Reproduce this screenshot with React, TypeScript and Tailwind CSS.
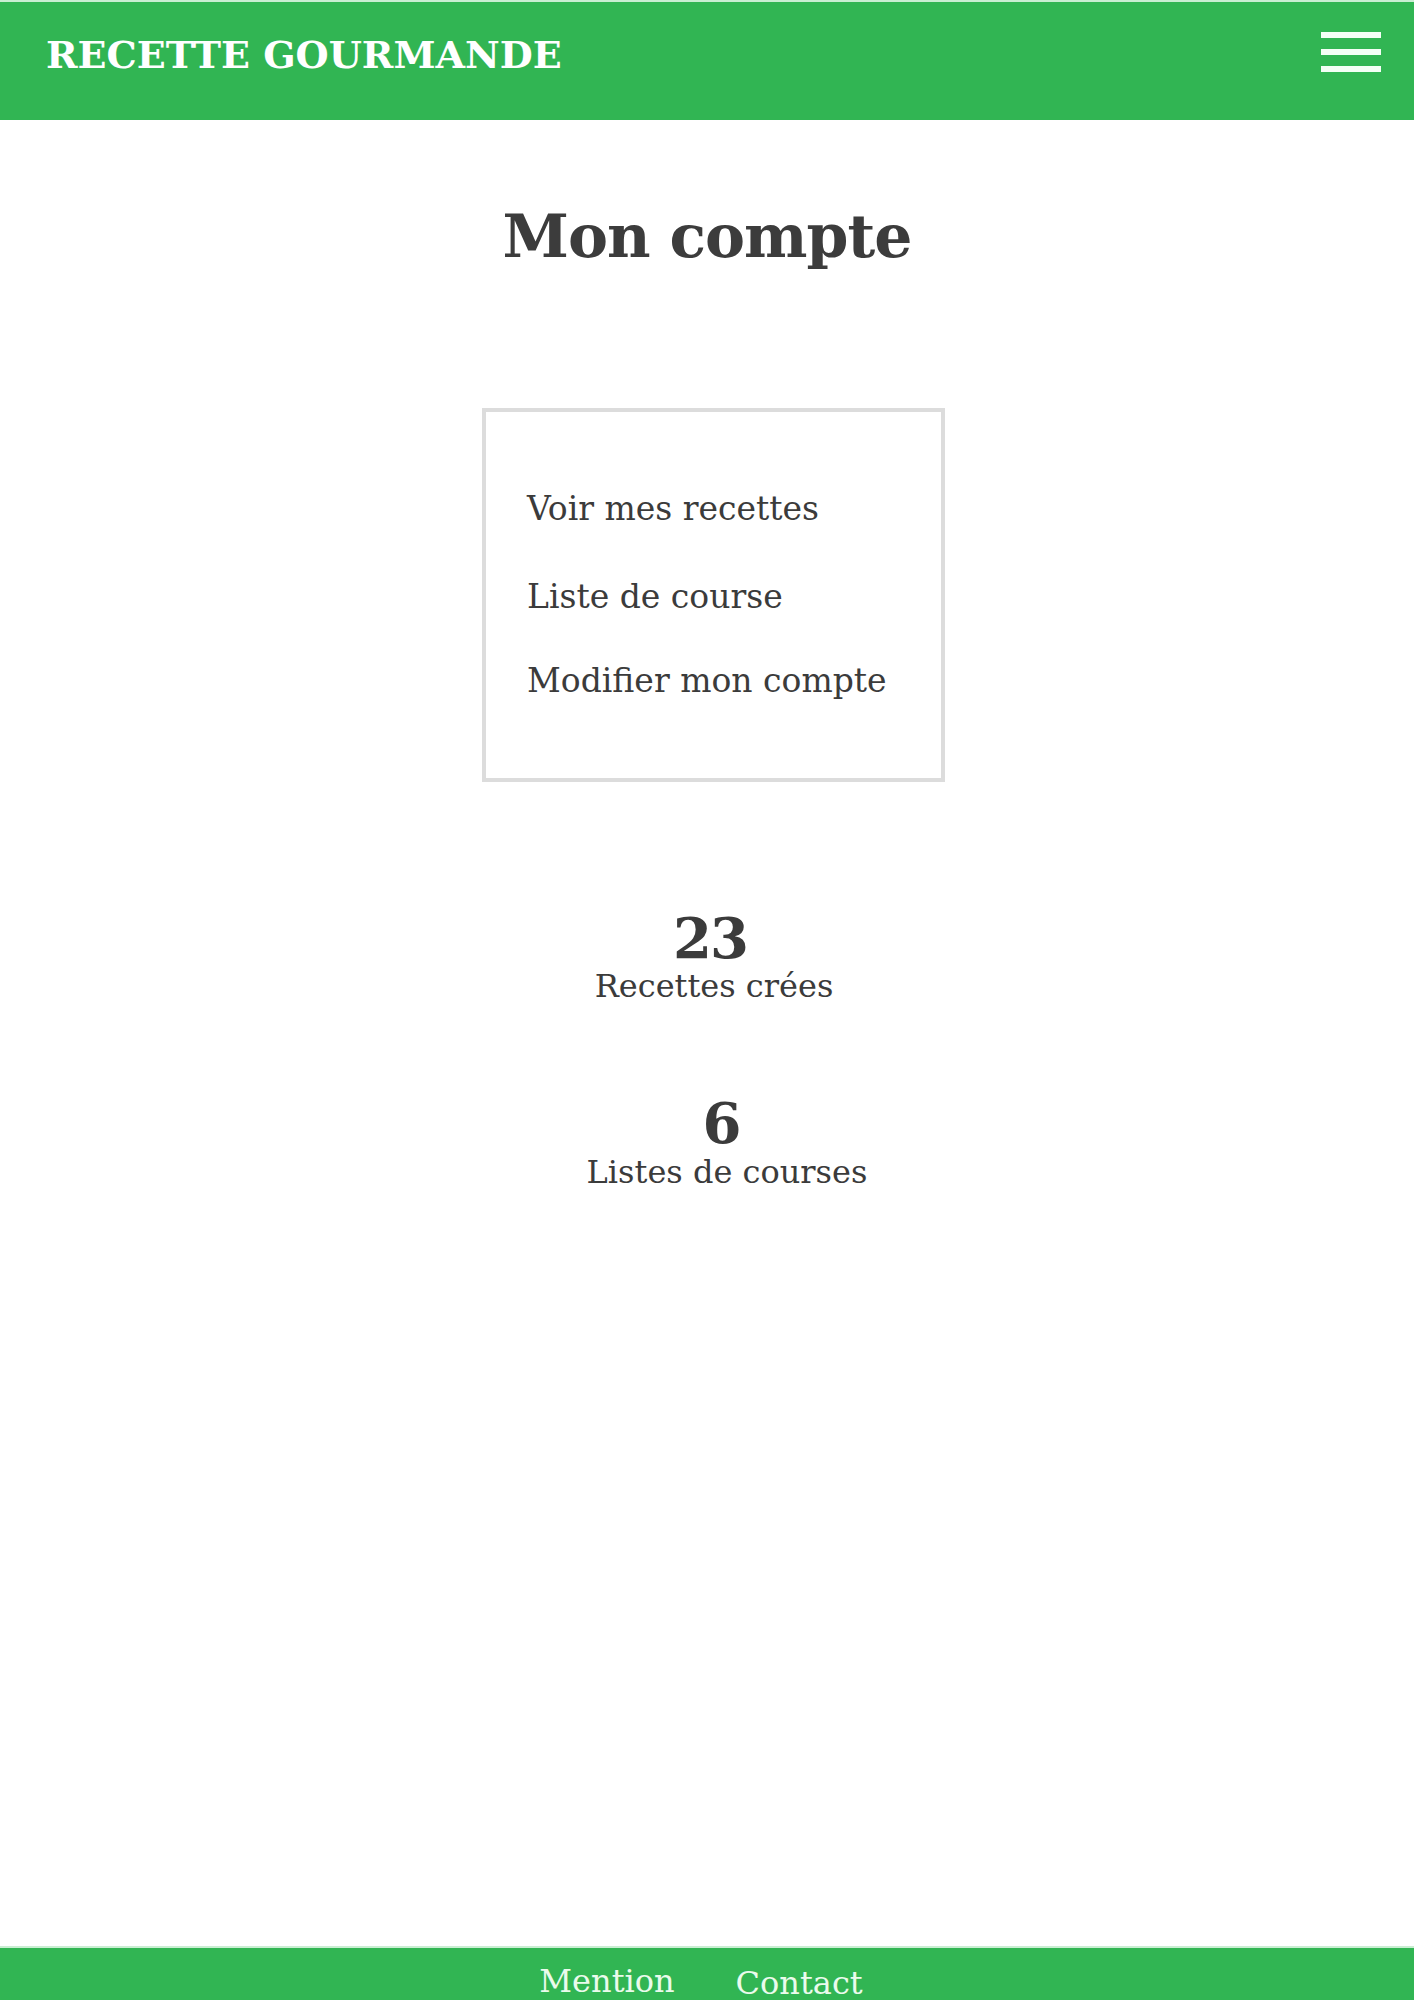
import React from "react";

export default function App() {
  const serif = { fontFamily: '"DejaVu Serif", "Liberation Serif", serif' };
  return (
    <div className="h-[2000px] w-full overflow-hidden bg-white flex flex-col text-[#3b3b3b]" style={serif}>
      <header className="h-[120px] shrink-0 border-t-2 border-[#c9eed2] bg-[#31b553] flex items-start justify-between pl-[46px] pr-[33px]">
        <div className="mt-[34px] text-[38px] leading-[38px] font-bold text-white">RECETTE GOURMANDE</div>
        <div className="mt-[30px] flex flex-col gap-[11px]">
          <span className="block h-[6px] w-[60px] bg-[#f4fff6]" />
          <span className="block h-[6px] w-[60px] bg-[#f4fff6]" />
          <span className="block h-[6px] w-[60px] bg-[#f4fff6]" />
        </div>
      </header>

      <main className="flex-1 flex flex-col items-center">
        <h1 className="mt-[86px] text-[60px] leading-[60px] font-bold tracking-[-1px] text-[#3c3c3c]">Mon compte</h1>

        <div className="mt-[142px] w-full flex justify-center pl-[13px]">
          <div className="w-[463px] h-[374px] border-4 border-[#dcdcdc] pl-[41px] pt-[80px]">
            <div className="text-[33px] leading-[33px]">Voir mes recettes</div>
            <div className="mt-[55px] text-[33px] leading-[33px]">Liste de course</div>
            <div className="mt-[51px] text-[33px] leading-[33px]">Modifier mon compte</div>
          </div>
        </div>

        <div className="mt-[128px] flex flex-col items-center pl-[6px]">
          <div className="text-[56px] leading-[56px] font-bold tracking-[-2px]">23</div>
          <div className="mt-[4px] text-[32px] leading-[32px] pl-[8px]">Recettes crées</div>
        </div>

        <div className="mt-[93px] flex flex-col items-center pl-[30px]">
          <div className="text-[56px] leading-[56px] font-bold">6</div>
          <div className="mt-[5px] text-[32px] leading-[32px] pl-[10px]">Listes de courses</div>
        </div>
      </main>

      <footer className="h-[54px] shrink-0 border-t-2 border-[#c9eed2] bg-[#31b553] flex justify-center gap-[61px] pt-[17px] pr-[12px] text-[#eafbec] text-[32px] leading-[32px]">
        <span>Mention</span>
        <span className="mt-[2px]">Contact</span>
      </footer>
    </div>
  );
}
